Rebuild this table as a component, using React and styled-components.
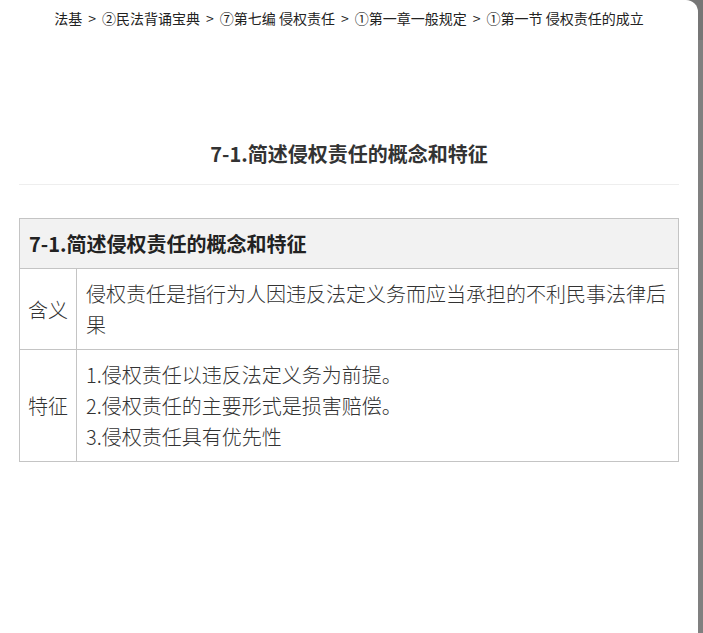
import { Fragment } from 'react';
import styled, { createGlobalStyle } from 'styled-components';

const crumbs = ['法基', '②民法背诵宝典', '⑦第七编 侵权责任', '①第一章一般规定', '①第一节 侵权责任的成立'];

const rows = [
  { label: '含义', lines: ['侵权责任是指行为人因违反法定义务而应当承担的不利民事法律后果'] },
  {
    label: '特征',
    lines: ['1.侵权责任以违反法定义务为前提。', '2.侵权责任的主要形式是损害赔偿。', '3.侵权责任具有优先性'],
  },
];

const App = () => (
  <>
    <GlobalStyle />
    <Page>
      <Panel>
        <Breadcrumb>
          {crumbs.map((crumb, i) => (
            <Fragment key={crumb}>
              {i > 0 && <Sep>&gt;</Sep>}
              {crumb}
            </Fragment>
          ))}
        </Breadcrumb>
        <Title>7-1.简述侵权责任的概念和特征</Title>
        <Table>
          <thead>
            <tr>
              <HeadCell colSpan={2}>7-1.简述侵权责任的概念和特征</HeadCell>
            </tr>
          </thead>
          <tbody>
            {rows.map(row => (
              <tr key={row.label}>
                <LabelCell>{row.label}</LabelCell>
                <Cell>
                  {row.lines.map(line => (
                    <div key={line}>{line}</div>
                  ))}
                </Cell>
              </tr>
            ))}
          </tbody>
        </Table>
      </Panel>
    </Page>
  </>
);

const GlobalStyle = createGlobalStyle`
  html, body {
    margin: 0;
    height: 100%;
  }
  body {
    background: linear-gradient(#767676 0, #767676 40px, #808080 40px);
    font-family: "Noto Sans CJK SC", "Noto Sans", sans-serif;
    color: #333;
  }
`;

const Page = styled.div`
  display: flex;
  height: 100vh;
  overflow: hidden;
`;

const Panel = styled.div`
  width: 698px;
  flex-shrink: 0;
  box-sizing: border-box;
  padding: 0 19px;
  background: #fff;
  border-top-right-radius: 12px;
`;

const Breadcrumb = styled.div`
  padding-top: 8px;
  font-size: 14px;
  line-height: 20px;
  text-align: center;
  color: #222;
  white-space: nowrap;
`;

const Sep = styled.span`
  margin: 0 6px;
`;

const Title = styled.h1`
  margin: 111px 0 0;
  padding-bottom: 15px;
  border-bottom: 1px solid #eee;
  font-size: 20px;
  line-height: 30px;
  font-weight: 700;
  text-align: center;
  color: #333;
`;

const Table = styled.table`
  width: 100%;
  margin-top: 33px;
  border-collapse: collapse;
  border: 1px solid #c4c4c4;
  font-size: 20px;
  line-height: 31px;
`;

const HeadCell = styled.th`
  padding: 9px 9px;
  background: #f2f2f2;
  border: 1px solid #c4c4c4;
  text-align: left;
  font-weight: 700;
  color: #222;
`;

const Cell = styled.td`
  padding: 9px 9px;
  border: 1px solid #c4c4c4;
  font-weight: 300;
  color: #333;
`;

const LabelCell = styled(Cell)`
  width: 1%;
  padding: 9px 8px;
  white-space: nowrap;
`;

export default App;
